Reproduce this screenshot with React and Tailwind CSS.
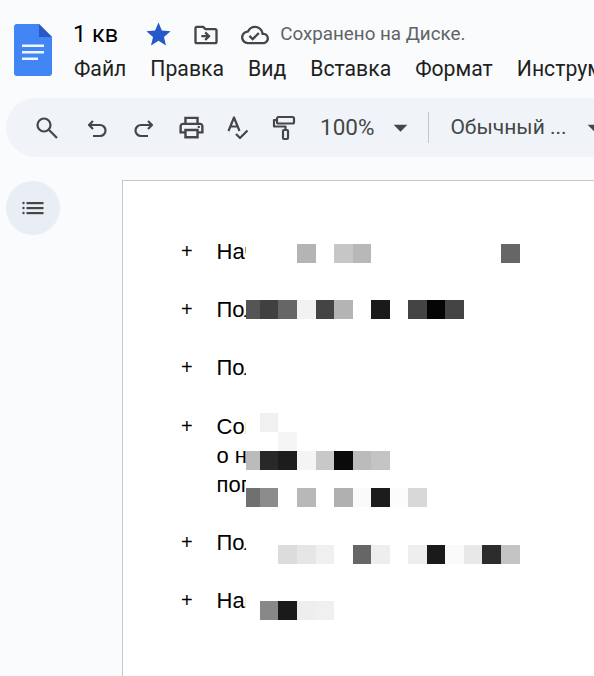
import {
  MdOutlineDriveFileMove,
  MdOutlineCloudDone,
  MdOutlinePrint,
  MdArrowDropDown,
  MdStar,
} from "react-icons/md";

const menu = ["Файл", "Правка", "Вид", "Вставка", "Формат", "Инструменты"];

// blurred bits of the document: [left, width, grey]
const rows = [
  { top: 244, cells: [[297, 19, "#b4b4b4"], [334, 19, "#c6c6c6"], [353, 18, "#b8b8b8"], [501, 19, "#666666"]] },
  { top: 300, cells: [[246, 14, "#555555"], [260, 18, "#404040"], [278, 19, "#666666"], [297, 19, "#f2f2f2"], [316, 18, "#444444"], [334, 19, "#b4b4b4"], [371, 19, "#1a1a1a"], [408, 19, "#444444"], [427, 18, "#050505"], [445, 19, "#444444"]] },
  { top: 413, cells: [[260, 18, "#f0f0f0"]] },
  { top: 432, cells: [[278, 19, "#f5f5f5"]] },
  { top: 451, cells: [[246, 14, "#bbbbbb"], [260, 18, "#282828"], [278, 19, "#1c1c1c"], [297, 19, "#f4f4f4"], [316, 18, "#c8c8c8"], [334, 19, "#0a0a0a"], [353, 18, "#bbbbbb"], [371, 19, "#c4c4c4"]] },
  { top: 488, cells: [[246, 14, "#707070"], [260, 18, "#8c8c8c"], [297, 19, "#b8b8b8"], [334, 19, "#b0b0b0"], [353, 18, "#fafafa"], [371, 19, "#1c1c1c"], [390, 18, "#fcfcfc"], [408, 19, "#d8d8d8"]] },
  { top: 545, cells: [[278, 19, "#dcdcdc"], [297, 19, "#e6e6e6"], [316, 18, "#f0f0f0"], [353, 18, "#666666"], [371, 19, "#eeeeee"], [408, 19, "#eeeeee"], [427, 18, "#1a1a1a"], [445, 19, "#fafafa"], [464, 18, "#e8e8e8"], [482, 19, "#2c2c2c"], [501, 19, "#c4c4c4"]] },
  { top: 601, cells: [[260, 18, "#888888"], [278, 19, "#1a1a1a"], [297, 19, "#eeeeee"], [316, 18, "#f0f0f0"]] },
];

// only what can be read in the picture, the rest of each line is hidden
const items = [["Нач"], ["Пол"], ["Пол"], ["Сог", "о н", "пог"], ["Пол"], ["Нап"]];

const DocsLogo = () => (
  <svg viewBox="0 0 38 52" className="h-[52px] w-[38px] shrink-0">
    <path d="M3 0h22l13 13v36a3 3 0 0 1-3 3H3a3 3 0 0 1-3-3V3a3 3 0 0 1 3-3z" fill="#4285f4" />
    <path d="M25 0l13 13H25z" fill="#2a56c6" />
    <path d="M8 20.500h22v2.400H8zM8 27h22v2.400H8zM8 33.500h16v2.400H8z" fill="#f1f5fd" />
  </svg>
);

const OutlineIcon = () => (
  <svg viewBox="0 0 24 16" className="h-4 w-6" fill="#444746">
    <circle cx="2.500" cy="3" r="1.200" />
    <circle cx="2.500" cy="8" r="1.200" />
    <circle cx="2.500" cy="13" r="1.200" />
    <rect x="5.500" y="2" width="17" height="2.200" />
    <rect x="5.500" y="7" width="17" height="2.200" />
    <rect x="5.500" y="12" width="17" height="2.200" />
  </svg>
);

const Stroke = ({ children, className = "h-6 w-6", viewBox = "0 0 24 24" }) => (
  <svg
    viewBox={viewBox}
    className={`shrink-0 ${className}`}
    fill="none"
    stroke="currentColor"
    strokeWidth="2.200"
    strokeLinejoin="round"
  >
    {children}
  </svg>
);

export default function App() {
  return (
    <div className="relative h-[676px] w-[594px] overflow-hidden bg-[#f9fbfd] font-['Roboto',sans-serif]">
      <header className="flex h-[98px] pl-[14px] pt-6">
        <DocsLogo />
        <div className="ml-[21px] -mt-[7px] flex min-w-0 flex-col">
          <div className="flex h-[35px] items-center whitespace-nowrap">
            <span className="text-[23.500px] text-black">1 кв</span>
            <MdStar className="ml-[26px] shrink-0 text-[29px] text-[#2559c9]" />
            <MdOutlineDriveFileMove className="ml-[19px] shrink-0 text-[28px] text-[#444746]" />
            <MdOutlineCloudDone className="ml-[21px] shrink-0 text-[28px] text-[#444746]" />
            <span className="ml-[11px] text-[18.800px] text-[#5f6368]">Сохранено на Диске.</span>
          </div>
          <nav className="ml-px mt-[1px] flex gap-6 whitespace-nowrap text-[21.200px] text-[#1f1f1f]">
            {menu.map((m) => (
              <span key={m}>{m}</span>
            ))}
          </nav>
        </div>
      </header>

      <div className="ml-[6px] flex h-[59px] w-[640px] items-center rounded-full bg-[#f0f4f9] pl-[29px] text-[#444746]">
        <Stroke>
          <circle cx="9" cy="9" r="6.500" />
          <path d="M13.800 13.800L22 22" />
        </Stroke>
        <Stroke className="ml-[26px] h-6 w-6">
          <path d="M8 5L4 9l4 4M4 9h11a5.500 5.500 0 0 1 0 11H8" />
        </Stroke>
        <Stroke className="ml-[23px] h-6 w-6">
          <path d="M16 5l4 4-4 4M20 9H9a5.500 5.500 0 0 0 0 11h7" />
        </Stroke>
        <MdOutlinePrint className="ml-[21px] shrink-0 text-[29px]" />
        <Stroke className="ml-[20px] h-6 w-6">
          <path d="M2.500 15L8 1.500 13.500 15M4.500 10.500h7M10 18l4 4 7.500-7.500" />
        </Stroke>
        <Stroke className="ml-[22px] h-[26px] w-6" viewBox="0 0 24 26">
          <rect x="5" y="2" width="17" height="6.500" rx="1.500" />
          <path d="M5 5H2v6.500h11.500V15" />
          <rect x="11" y="15" width="5" height="9" rx="1" />
        </Stroke>
        <span className="ml-[24px] text-[22.500px]">100%</span>
        <MdArrowDropDown className="ml-[10px] shrink-0 text-[33px]" />
        <div className="ml-[11px] h-[31px] w-px shrink-0 bg-[#c7c7c7]" />
        <span className="ml-[21px] whitespace-nowrap text-[21px]">Обычный ...</span>
        <MdArrowDropDown className="ml-[11px] shrink-0 text-[33px]" />
      </div>

      <div className="flex">
        <div className="ml-[6px] mt-6 flex h-[54px] w-[54px] items-center justify-center rounded-full bg-[#e9eef6]">
          <OutlineIcon />
        </div>
        <main className="ml-[62px] mt-[23px] h-[600px] flex-1 border-l border-t border-[#c7c7c7] bg-white pl-[58px] pt-[56px] font-['Liberation_Sans',sans-serif] text-[22px] leading-[29.200px] text-black">
          {items.map((lines, i) => (
            <div key={i} className="mb-[29px] flex">
              <span className="w-[35.500px] shrink-0 text-[20px]">+</span>
              <div className="w-[29px] overflow-hidden whitespace-nowrap">
                {lines.map((l) => (
                  <div key={l}>{l}</div>
                ))}
              </div>
            </div>
          ))}
        </main>
      </div>

      {rows.map((row) =>
        row.cells.map(([left, width, grey]) => (
          <div
            key={`${row.top}-${left}`}
            className="absolute h-[19px]"
            style={{ top: row.top, left, width, backgroundColor: grey }}
          />
        )),
      )}
    </div>
  );
}
